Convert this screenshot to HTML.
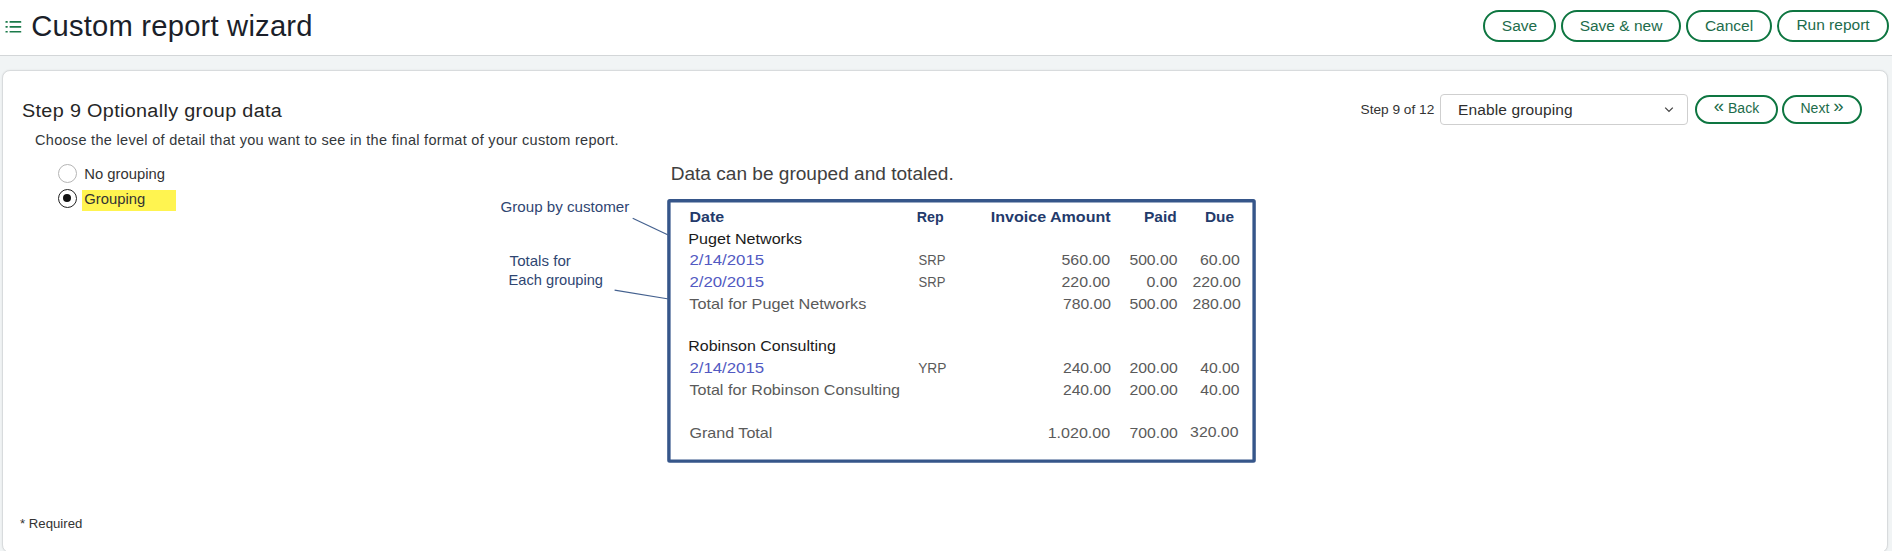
<!DOCTYPE html>
<html lang="en">
<head>
<meta charset="utf-8">
<title>Custom report wizard</title>
<style>
  html, body { margin: 0; padding: 0; }
  body {
    width: 1892px; height: 551px; overflow: hidden; position: relative;
    background: #f1f4f5;
    font-family: "Liberation Sans", sans-serif;
    color: #2b2b2b;
  }
  .abs { position: absolute; white-space: nowrap; }
  #header {
    position: absolute; left: 0; top: 0; width: 1892px; height: 55px;
    background: #fff; border-bottom: 1px solid #d3d6d8;
  }
  #title { left: 31.3px; top: 9.7px; font-size: 29.2px; line-height: 32px; letter-spacing: 0.2px; color: #1b1f2a; }
  .btn {
    position: absolute; box-sizing: border-box; border: 2px solid #0e7641; border-radius: 16px;
    background: #fff; color: #1d6c4b; text-align: center; white-space: nowrap;
  }
  .btn.top { top: 10px; height: 32px; font-size: 15.5px; line-height: 27px; }
  .btn.nav { top: 95px; height: 29px; font-size: 14px; line-height: 22px; }
  .chev { font-size: 18.5px; line-height: 0; position: relative; top: -1px; }
  #card {
    position: absolute; left: 2px; top: 70px; width: 1886px; height: 483px;
    background: #fff; border: 1px solid #d8dbdd; border-radius: 8px; box-sizing: border-box;
    box-shadow: 0 0 2px rgba(0,0,0,0.08);
  }
  #h2 { left: 22px; top: 99.7px; font-size: 18px; line-height: 22px; letter-spacing: 0.3px; color: #262626; transform: scaleX(1.1); transform-origin: 0 0; }
  #desc { left: 35px; top: 131px; font-size: 14.5px; line-height: 18px; letter-spacing: 0.3px; color: #33373b; }
  .radio { position: absolute; box-sizing: border-box; width: 19px; height: 19px; border-radius: 50%; background: #fff; }
  #r1 { left: 58px; top: 164px; border: 1px solid #b5b5b5; }
  #r2 { left: 58px; top: 189.2px; border: 1.5px solid #222; }
  #r2:after { content: ""; position: absolute; left: 4px; top: 4px; width: 8px; height: 8px; border-radius: 50%; background: #111; }
  #l1 { left: 84.3px; top: 165px; font-size: 14.8px; line-height: 18px; color: #333; }
  #hl { position: absolute; left: 82px; top: 190px; width: 94px; height: 20.6px; background: #fff450; }
  #l2 { left: 84.3px; top: 190px; font-size: 14.8px; line-height: 18px; color: #333; }
  #stepof { left: 1360.5px; top: 101.8px; font-size: 13.7px; line-height: 16px; color: #333; }
  #sel {
    position: absolute; box-sizing: border-box; left: 1440px; top: 94px; width: 248px; height: 31px;
    border: 1px solid #cfcfcf; border-radius: 4px; background: #fff;
  }
  #seltxt { left: 1458px; top: 100px; font-size: 15.5px; letter-spacing: 0.13px; line-height: 19px; color: #2e2e2e; }
  #req { left: 20px; top: 515.8px; font-size: 13.2px; line-height: 16px; color: #333; }
  svg { position: absolute; left: 0; top: 0; }
</style>
</head>
<body>
<div id="header"></div>
<svg width="30" height="55" viewBox="0 0 30 55">
  <g fill="#1b7a4a">
    <rect x="5.4" y="21.1" width="2.4" height="1.7" rx="0.6"/><rect x="9.5" y="21.1" width="11.8" height="1.7" rx="0.6"/>
    <rect x="5.4" y="26" width="2.4" height="1.7" rx="0.6"/><rect x="9.5" y="26" width="11.8" height="1.7" rx="0.6"/>
    <rect x="5.4" y="30.9" width="2.4" height="1.7" rx="0.6"/><rect x="9.5" y="30.9" width="11.8" height="1.7" rx="0.6"/>
  </g>
</svg>
<div id="title" class="abs">Custom report wizard</div>

<div class="btn top" style="left:1483px;width:73px;">Save</div>
<div class="btn top" style="left:1561px;width:120px;">Save &amp; new</div>
<div class="btn top" style="left:1686px;width:86px;">Cancel</div>
<div class="btn top" style="left:1777px;width:112px;line-height:25px;">Run report</div>

<div id="card"></div>
<div id="h2" class="abs">Step 9 Optionally group data</div>
<div id="desc" class="abs">Choose the level of detail that you want to see in the final format of your custom report.</div>
<div id="r1" class="radio"></div>
<div id="l1" class="abs">No grouping</div>
<div id="hl"></div>
<div id="r2" class="radio"></div>
<div id="l2" class="abs">Grouping</div>

<div id="stepof" class="abs">Step 9 of 12</div>
<div id="sel"></div>
<div id="seltxt" class="abs">Enable grouping</div>
<svg width="1892" height="140" viewBox="0 0 1892 140" style="pointer-events:none">
  <path d="M1665.2 107.6 L1669 111.4 L1672.8 107.6" fill="none" stroke="#444" stroke-width="1.3"/>
</svg>
<div class="btn nav" style="left:1695px;width:83px;"><span class="chev">&laquo;</span> Back</div>
<div class="btn nav" style="left:1782px;width:80px;">Next <span class="chev">&raquo;</span></div>

<svg id="diagram" width="1892" height="551" viewBox="0 0 1892 551" style="pointer-events:none" font-family="'Liberation Sans', sans-serif">
  <rect x="668.9" y="200.7" width="585.2" height="260.4" rx="0.8" fill="#fff" stroke="#36568a" stroke-width="3.4"/>
  <g stroke="#44618f" stroke-width="1.2" fill="none">
    <line x1="632.7" y1="218.3" x2="668.7" y2="235.3"/>
    <line x1="614.6" y1="290.2" x2="668.7" y2="299"/>
  </g>
  <text x="670.69" y="179.7" font-size="18.9" fill="#404040" textLength="283.07" lengthAdjust="spacingAndGlyphs">Data can be grouped and totaled.</text>
  <text x="500.50" y="211.8" font-size="14.6" fill="#2f4672" textLength="128.85" lengthAdjust="spacingAndGlyphs">Group by customer</text>
  <text x="509.60" y="265.6" font-size="14.6" fill="#2f4672" textLength="61.25" lengthAdjust="spacingAndGlyphs">Totals for</text>
  <text x="508.60" y="285.4" font-size="14.6" fill="#2f4672" textLength="94.42" lengthAdjust="spacingAndGlyphs">Each grouping</text>
  <text x="689.50" y="222.1" font-size="14.2" fill="#233a6b" font-weight="bold" textLength="34.58" lengthAdjust="spacingAndGlyphs">Date</text>
  <text x="916.80" y="222.1" font-size="14.2" fill="#233a6b" font-weight="bold" textLength="26.87" lengthAdjust="spacingAndGlyphs">Rep</text>
  <text x="990.70" y="222.1" font-size="14.2" fill="#233a6b" font-weight="bold" textLength="119.99" lengthAdjust="spacingAndGlyphs">Invoice Amount</text>
  <text x="1144.00" y="222.1" font-size="14.2" fill="#233a6b" font-weight="bold" textLength="32.73" lengthAdjust="spacingAndGlyphs">Paid</text>
  <text x="1205.00" y="222.1" font-size="14.2" fill="#233a6b" font-weight="bold" textLength="29.08" lengthAdjust="spacingAndGlyphs">Due</text>
  <text x="688.36" y="243.8" font-size="14.2" fill="#1a1a1a" textLength="113.74" lengthAdjust="spacingAndGlyphs">Puget Networks</text>
  <text x="689.40" y="265.2" font-size="14.2" fill="#525ac2" textLength="74.77" lengthAdjust="spacingAndGlyphs">2/14/2015</text>
  <text x="689.40" y="287.1" font-size="14.2" fill="#525ac2" textLength="74.77" lengthAdjust="spacingAndGlyphs">2/20/2015</text>
  <text x="689.30" y="308.8" font-size="14.2" fill="#5a5a5a" textLength="177.01" lengthAdjust="spacingAndGlyphs">Total for Puget Networks</text>
  <text x="688.27" y="351.4" font-size="14.2" fill="#1a1a1a" textLength="147.53" lengthAdjust="spacingAndGlyphs">Robinson Consulting</text>
  <text x="689.40" y="373.2" font-size="14.2" fill="#525ac2" textLength="74.77" lengthAdjust="spacingAndGlyphs">2/14/2015</text>
  <text x="689.40" y="395.3" font-size="14.2" fill="#5a5a5a" textLength="210.71" lengthAdjust="spacingAndGlyphs">Total for Robinson Consulting</text>
  <text x="689.40" y="437.5" font-size="14.2" fill="#5a5a5a" textLength="82.97" lengthAdjust="spacingAndGlyphs">Grand Total</text>
  <text x="918.60" y="265.2" font-size="14.2" fill="#5a5a5a" textLength="26.83" lengthAdjust="spacingAndGlyphs">SRP</text>
  <text x="918.60" y="287.1" font-size="14.2" fill="#5a5a5a" textLength="26.83" lengthAdjust="spacingAndGlyphs">SRP</text>
  <text x="918.20" y="373.2" font-size="14.2" fill="#5a5a5a" textLength="28.25" lengthAdjust="spacingAndGlyphs">YRP</text>
  <text x="1061.50" y="265.2" font-size="14.2" fill="#5a5a5a" textLength="48.68" lengthAdjust="spacingAndGlyphs">560.00</text>
  <text x="1129.40" y="265.2" font-size="14.2" fill="#5a5a5a" textLength="48.08" lengthAdjust="spacingAndGlyphs">500.00</text>
  <text x="1200.00" y="265.2" font-size="14.2" fill="#5a5a5a" textLength="39.78" lengthAdjust="spacingAndGlyphs">60.00</text>
  <text x="1061.50" y="287.4" font-size="14.2" fill="#5a5a5a" textLength="48.68" lengthAdjust="spacingAndGlyphs">220.00</text>
  <text x="1146.40" y="287.4" font-size="14.2" fill="#5a5a5a" textLength="31.08" lengthAdjust="spacingAndGlyphs">0.00</text>
  <text x="1192.40" y="287.4" font-size="14.2" fill="#5a5a5a" textLength="48.28" lengthAdjust="spacingAndGlyphs">220.00</text>
  <text x="1063.00" y="309.0" font-size="14.2" fill="#5a5a5a" textLength="47.88" lengthAdjust="spacingAndGlyphs">780.00</text>
  <text x="1129.40" y="309.0" font-size="14.2" fill="#5a5a5a" textLength="48.08" lengthAdjust="spacingAndGlyphs">500.00</text>
  <text x="1192.40" y="309.0" font-size="14.2" fill="#5a5a5a" textLength="48.28" lengthAdjust="spacingAndGlyphs">280.00</text>
  <text x="1062.90" y="373.2" font-size="14.2" fill="#5a5a5a" textLength="48.08" lengthAdjust="spacingAndGlyphs">240.00</text>
  <text x="1129.40" y="373.2" font-size="14.2" fill="#5a5a5a" textLength="48.38" lengthAdjust="spacingAndGlyphs">200.00</text>
  <text x="1200.20" y="373.2" font-size="14.2" fill="#5a5a5a" textLength="39.38" lengthAdjust="spacingAndGlyphs">40.00</text>
  <text x="1062.90" y="395.3" font-size="14.2" fill="#5a5a5a" textLength="48.08" lengthAdjust="spacingAndGlyphs">240.00</text>
  <text x="1129.40" y="395.3" font-size="14.2" fill="#5a5a5a" textLength="48.38" lengthAdjust="spacingAndGlyphs">200.00</text>
  <text x="1200.20" y="395.3" font-size="14.2" fill="#5a5a5a" textLength="39.38" lengthAdjust="spacingAndGlyphs">40.00</text>
  <text x="1047.67" y="437.5" font-size="14.2" fill="#5a5a5a" textLength="62.51" lengthAdjust="spacingAndGlyphs">1.020.00</text>
  <text x="1129.40" y="437.5" font-size="14.2" fill="#5a5a5a" textLength="48.38" lengthAdjust="spacingAndGlyphs">700.00</text>
  <text x="1190.10" y="436.7" font-size="14.2" fill="#5a5a5a" textLength="48.38" lengthAdjust="spacingAndGlyphs">320.00</text>
</svg>
<div id="req" class="abs">* Required</div>
</body>
</html>
